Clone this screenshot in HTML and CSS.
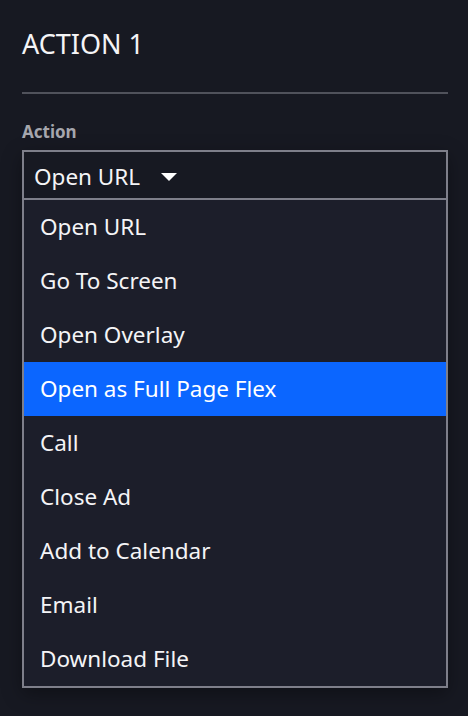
FILE: index.html
```html
<!DOCTYPE html>
<html>
<head>
<meta charset="utf-8">
<link rel="stylesheet" href="styles.css">
</head>
<body>
<div class="panel">
  <h1 class="title">ACTION 1</h1>
  <div class="divider"></div>
  <div class="label">Action</div>
  <div class="dropdown">
    <div class="select">
      <span class="value">Open URL</span>
      <svg class="caret" width="16" height="8" viewBox="0 0 16 8"><path d="M0 0 H16 L8 8 Z" fill="#ffffff"/></svg>
    </div>
    <ul class="menu">
      <li class="item">Open URL</li>
      <li class="item">Go To Screen</li>
      <li class="item">Open Overlay</li>
      <li class="item active">Open as Full Page Flex</li>
      <li class="item">Call</li>
      <li class="item">Close Ad</li>
      <li class="item">Add to Calendar</li>
      <li class="item">Email</li>
      <li class="item">Download File</li>
    </ul>
  </div>
</div>
</body>
</html>
```

FILE: styles.css
```css
html, body {
  margin: 0;
  padding: 0;
  background: #171922;
  height: 100%;
}
body {
  font-family: "Noto Sans", "Open Sans", sans-serif;
  color: #f4f4f6;
}
.panel {
  padding: 0 20px 0 22px;
  width: 426px;
}
.title {
  margin: 0;
  padding-top: 26px;
  font-size: 27px;
  line-height: 36px;
  font-weight: 400;
  color: #f4f4f6;
}
.divider {
  margin-top: 30px;
  height: 2px;
  background: #50525b;
}
.label {
  margin-top: 26px;
  font-size: 17px;
  line-height: 24px;
  font-weight: 700;
  color: #a5a6ad;
}
.dropdown {
  margin-top: 6px;
  box-shadow: 0 6px 18px rgba(0, 0, 0, 0.35);
}
.select {
  display: flex;
  align-items: center;
  height: 46px;
  border: 2px solid #7e7f8a;
  padding-left: 10px;
  background: #171922;
  box-sizing: content-box;
}
.value {
  font-size: 22.5px;
  line-height: 46px;
  padding-top: 4px;
}
.caret {
  margin-left: 21px;
  margin-top: 4px;
}
.menu {
  list-style: none;
  margin: 0;
  padding: 0;
  border: 2px solid #7e7f8a;
  border-top: none;
  background: #1c1e2a;
}
.item {
  height: 54px;
  line-height: 54px;
  font-size: 22.5px;
  padding-left: 16px;
  color: #f4f4f6;
}
.item.active {
  background: #0b66ff;
  color: #ffffff;
}
```
